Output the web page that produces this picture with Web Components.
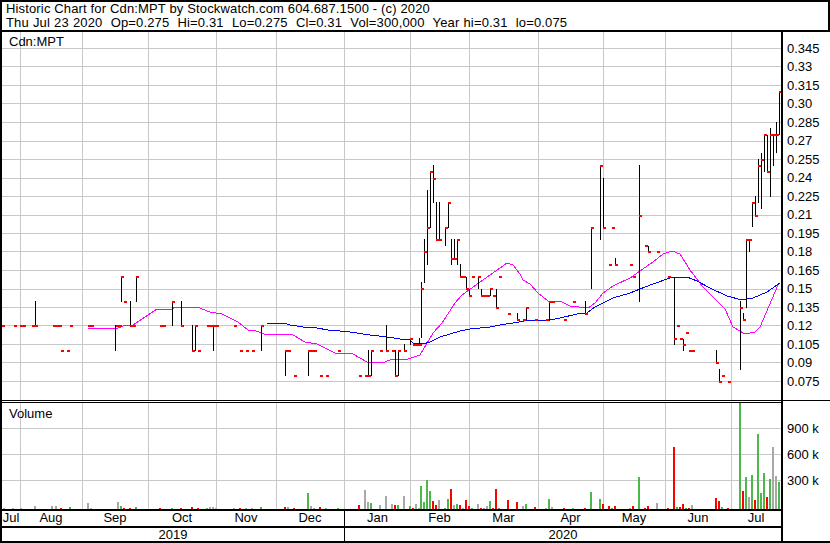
<!DOCTYPE html>
<html>
<head>
<meta charset="utf-8">
<title>Historic Chart</title>
<style>
    html, body { margin: 0; padding: 0; background: #fff; }
    body { font-family: "Liberation Sans", Arial, sans-serif; font-size: 13px; color: #000; }
</style>
</head>
<body>
<stock-chart>
    <span slot="line">Historic Chart for Cdn:MPT by Stockwatch.com 604.687.1500 - (c) 2020</span>
    <span slot="line" class="quote">Thu Jul 23 2020  Op=0.275  Hi=0.31  Lo=0.275  Cl=0.31  Vol=300,000  Year hi=0.31  lo=0.075</span>
</stock-chart>

<script>
// everything below is in page pixels, the svg viewBox takes care of the offset
const GRID_X = [20, 82, 148, 216, 276, 344, 410, 469, 538, 603, 665, 731];
const GRID_Y = [48, 66, 85, 103, 122, 141, 159, 178, 196, 215, 233, 251, 270, 289, 307, 325, 344, 362, 381];
const VOL_GRID_Y = [428, 454, 480];

const BARS = [
    [35,301,326],[115,325,351],[121,276,302],[130,301,326],[136,276,302],[172,301,326],[181,301,326],[192,325,351],[195,325,351],
    [213,325,351],[261,325,351],[285,350,376],[308,350,376],[368,350,376],[371,350,376],[386,325,351],[395,350,376],[398,350,376],
    [404,344,351],[410,338,345],[419,338,345],[421,282,338],[424,239,283],[427,190,265],[430,172,228],[433,165,203],[436,202,240],
    [439,202,240],[445,227,246],[448,203,228],[451,239,265],[454,239,259],[457,239,265],[460,264,277],[466,277,289],[469,289,296],
    [478,277,289],[481,289,296],[490,289,296],[496,289,308],[517,313,320],[526,308,320],[549,302,320],[585,301,313],[591,227,289],
    [600,165,240],[603,178,228],[615,258,265],[639,165,302],[648,246,252],[674,277,345],[683,339,351],[716,350,363],[719,369,382],
    [740,301,370],[743,313,320],[746,239,308],[749,240,252],[752,203,227],[755,196,216],[758,159,203],[761,153,209],[764,134,172],
    [767,135,172],[770,128,197],[773,135,166],[776,122,153],[779,92,135]
];

// x, centre y, number of days side by side
const CLOSES = [
    [2,325.7],[14,325.7],[20,325.7,2],[32,325.7,2],[53,325.7,3],[70,325.7],[88,325.7,2],[116,325.7,2],[130,325.7,2],[160,325.7,2],
    [181,325.7],[195,325.7],[207,325.7],[210,325.7,3],[234,325.7],[261,325.7],
    [61,351],[67,351],[192,351],[198,351],[240,351],[246,351],[252,351],[285,351,2],[308,351,3],[338,351],[371,351],[380,351],[386,351],
    [392,351],[398,351],[404,351],
    [124,302],[172,302],[121,276.7],[136,276.7],[294,376],[320,376],[326,376],[359,376],[365,376,2],[395,376],
    [410,339],[413,345,3],[421,288.7],[424,251.7],[427,228],[430,172],[433,178.7],[436,240],[439,240],[445,228],[448,202.7],
    [451,258.7],[454,258.7],[457,240],[460,277,2],[466,288.7],[469,296],[472,277],[478,277],[481,296,3],[490,288.7],[493,296],
    [496,307.7],[499,277],[508,313.7],[517,320],[523,320],[526,307.7],[535,320],[546,320],[549,302,2],[564,320],[573,302],[585,313.7],
    [591,228],[600,165.7],[603,228],[609,265],[612,228],[615,265],[630,265],[633,277],[639,216],[645,246],[648,252],[657,252],
    [668,277],[674,338.7],[677,326],[680,338.7],[683,345],[686,332.7],[689,351,2],[716,362.7],[719,381.7],[722,375.7],[728,381.7],
    [740,307.7],[743,320],[746,240,2],[752,202.7],[755,216],[758,165.7],[761,159.7],[764,135],[767,172],[770,135,2],[776,135],[779,92]
];

const BLUE_LINE = "267,323 287,324 290,325 303,327 317,328 328,330 340,331 350,332 370,335 387,337 400,339 410,340 413,343 423,344 430,342 440,337 450,334 460,331 470,329 490,327 500,325 513,323 530,320 550,320 560,318 577,314 587,313 595,307 603,303 613,298 630,293 640,289 653,284 670,278 687,277 697,281 710,288 727,296 742,300 753,298 767,292 780,283";
const PINK_LINE = "88,328 118,328 123,326 133,325 157,309 172,309 175,307 197,307 210,312 222,314 238,322 248,330 253,330 267,335 280,334 293,335 305,342 317,344 335,353 353,354 367,362 385,362 392,359 408,359 420,355 423,350 433,333 442,323 455,303 462,295 480,282 500,268 507,263 513,265 520,274 523,280 530,284 538,293 548,301 562,302 570,306 588,308 595,303 603,293 613,286 630,278 640,271 653,262 663,254 672,251 680,254 690,270 703,287 725,309 733,327 745,334 755,332 760,327 778,285";

const VOLUME = {
    "#ff0000": [[60,1],[123,1],[129,1],[159,1],[180,1],[191,2],[197,1],[239,1],[284,2],[293,1],[319,2],[358,4],[394,4],[412,1],[432,8],[435,4],[450,20],[459,4],[465,9],[468,3],[480,1],[492,1],[495,20],[507,9],[516,7],[534,2],[563,1],[584,1],[602,5],[608,3],[614,3],[632,3],[644,1],[647,3],[667,1],[673,62],[679,2],[682,5],[688,1],[715,11],[718,8],[727,1],[742,18],[754,9],[766,12]],
    "#4cb84c": [[69,2],[120,3],[135,2],[171,1],[206,1],[260,2],[307,16],[337,1],[370,6],[397,4],[409,3],[420,23],[423,7],[426,29],[429,18],[444,1],[447,10],[456,5],[471,1],[489,8],[498,1],[525,5],[548,10],[572,1],[590,17],[599,10],[611,1],[638,32],[676,2],[685,1],[721,2],[739,107],[745,32],[751,34],[757,75],[760,16],[763,36],[769,30],[778,27]],
    "#a8a8a8": [[3,1],[12,1],[20,1],[34,3],[51,3],[55,3],[87,6],[90,1],[117,7],[209,2],[212,2],[215,1],[233,1],[245,1],[251,1],[287,2],[310,3],[313,1],[325,1],[364,19],[367,7],[379,4],[385,13],[391,5],[403,13],[415,5],[418,1],[438,9],[453,4],[462,1],[477,5],[483,1],[486,3],[522,3],[545,1],[551,2],[629,1],[656,6],[691,4],[748,12],[772,62],[775,33]]
};

const rect = (x, y, w, h) => `M${x} ${y}h${w}v${h}h${-w}z`;

function gridPath(rows, top, bottom) {
    let d = GRID_X.map(x => rect(x, top, 1, bottom - top)).join("");
    d += rows.map(y => rect(2, y, 779, 1)).join("");
    return d;
}

class PricePane extends HTMLElement {
    constructor() {
        super();
        this.shadowDOM = this.attachShadow({mode: "open"});
    }

    connectedCallback() {
        const bars = BARS.map(b => rect(b[0], b[1], 1, b[2] - b[1])).join("");
        const ticks = CLOSES.map(c => rect(c[0], Math.round(c[1] - 1), 3 * (c[2] || 1), 2)).join("");
        this.shadowDOM.innerHTML = `
        <style>
            :host { display: block; position: relative; background: #fff; }
            svg { display: block; shape-rendering: crispEdges; }
            .label { position: absolute; left: 7px; top: 2px; line-height: 15px; }
        </style>
        <svg width="779" height="368" viewBox="2 32 779 368">
            <path fill="#c8c8c8" d="${gridPath(GRID_Y, 32, 400)}"/>
            <polyline fill="none" stroke="#ff00ff" points="${PINK_LINE}"/>
            <polyline fill="none" stroke="#0000ff" points="${BLUE_LINE}"/>
            <path fill="#000" d="${bars}"/>
            <path fill="#ff0000" d="${ticks}"/>
        </svg>
        <div class="label"><slot></slot></div>
        `;
    }
}

class VolumePane extends HTMLElement {
    constructor() {
        super();
        this.shadowDOM = this.attachShadow({mode: "open"});
    }

    connectedCallback() {
        const groups = Object.keys(VOLUME).map(colour => {
            const d = VOLUME[colour].map(v => rect(v[0], 509 - v[1], 2, v[1])).join("");
            return `<path fill="${colour}" d="${d}"/>`;
        }).join("");
        this.shadowDOM.innerHTML = `
        <style>
            :host { display: block; position: relative; background: #fff; padding-top: 1px; }
            .rule { height: 1px; background: #000; }
            svg { display: block; shape-rendering: crispEdges; }
            .label { position: absolute; left: 7px; top: 5px; line-height: 15px; }
        </style>
        <div class="rule"></div>
        <svg width="779" height="106" viewBox="2 403 779 106">
            <path fill="#c8c8c8" d="${gridPath(VOL_GRID_Y, 403, 509)}"/>
            ${groups}
        </svg>
        <div class="label"><slot></slot></div>
        `;
    }
}

class AxisLabels extends HTMLElement {
    constructor() {
        super();
        this.shadowDOM = this.attachShadow({mode: "open"});
    }

    connectedCallback() {
        const step = this.getAttribute("step");
        const top = this.getAttribute("top");
        const rows = this.getAttribute("labels").split(" ").map(t => `<span>${t.replace("_", " ")}</span>`).join("");
        this.shadowDOM.innerHTML = `
        <style>
            :host { display: flex; flex-direction: column; padding: ${top}px 0 0 4px; box-sizing: border-box; background: #fff; }
            span { height: ${step}px; line-height: ${step}px; white-space: nowrap; }
        </style>
        ${rows}
        `;
    }
}

class MonthRow extends HTMLElement {
    constructor() {
        super();
        this.shadowDOM = this.attachShadow({mode: "open"});
    }

    connectedCallback() {
        const cells = this.getAttribute("cells").split(" ").map(c => c.split(":"));
        const mark = this.getAttribute("mark");
        this.shadowDOM.innerHTML = `
        <style>
            :host { display: grid; grid-template-columns: ${cells.map(c => c[1] + "px").join(" ")}; background: #fff; }
            span { text-align: center; line-height: 13px; white-space: nowrap; box-sizing: border-box; }
            .mark { border-left: 1px solid #000; }
        </style>
        ${cells.map(c => `<span class="${c[0] === mark ? "mark" : ""}">${c[0]}</span>`).join("")}
        `;
    }
}

class StockChart extends HTMLElement {
    constructor() {
        super();
        this.shadowDOM = this.attachShadow({mode: "open"});
    }

    connectedCallback() {
        const prices = [];
        for (let p = 345; p >= 75; p -= 15) {
            prices.push((p / 1000).toFixed(3).replace(/^(0\.\d\d)0$/, "$1"));
        }
        this.shadowDOM.innerHTML = `
        <style>
            :host { display: block; width: 830px; height: 543px; overflow: hidden; background: #fff; }
            .title { display: flex; flex-direction: column; height: 30px; padding-left: 4px; box-sizing: border-box;
                     border: 2px solid #000; border-bottom: 0; line-height: 14px; white-space: pre; letter-spacing: 0.15px; }
            .frame { display: grid; grid-template-columns: 781px 47px; grid-template-rows: 369px 108px 17px 15px 2px;
                     border-top: 2px solid #000; border-left: 2px solid #000; }
            .left { border-right: 2px solid #000; }
            .under { border-bottom: 1px solid #000; }
            .top-rule { border-top: 2px solid #000; }
            .end { grid-column: 1 / 3; height: 2px; background: #000; }
            ::slotted(span) { display: block; }
            ::slotted(.quote) { word-spacing: 0.33px; }
        </style>
        <div class="title"><slot name="line"></slot></div>
        <div class="frame">
            <price-pane class="left under">Cdn:MPT</price-pane>
            <axis-labels class="under" top="7.5" step="18.52" labels="${prices.join(" ")}"></axis-labels>
            <volume-pane class="left">Volume</volume-pane>
            <axis-labels top="15" step="26" labels="900_k 600_k 300_k"></axis-labels>
            <month-row class="left top-rule" mark="Jan" cells="Jul:18 Aug:62 Sep:66 Oct:68 Nov:60 Dec:68 Jan:66 Feb:59 Mar:69 Apr:65 May:62 Jun:66 Jul:50"></month-row>
            <div></div>
            <month-row class="left top-rule" mark="2020" cells="2019:342 2020:437"></month-row>
            <div></div>
            <div class="end"></div>
        </div>
        `;
    }
}

customElements.define("price-pane", PricePane);
customElements.define("volume-pane", VolumePane);
customElements.define("axis-labels", AxisLabels);
customElements.define("month-row", MonthRow);
customElements.define("stock-chart", StockChart);
</script>
</body>
</html>
